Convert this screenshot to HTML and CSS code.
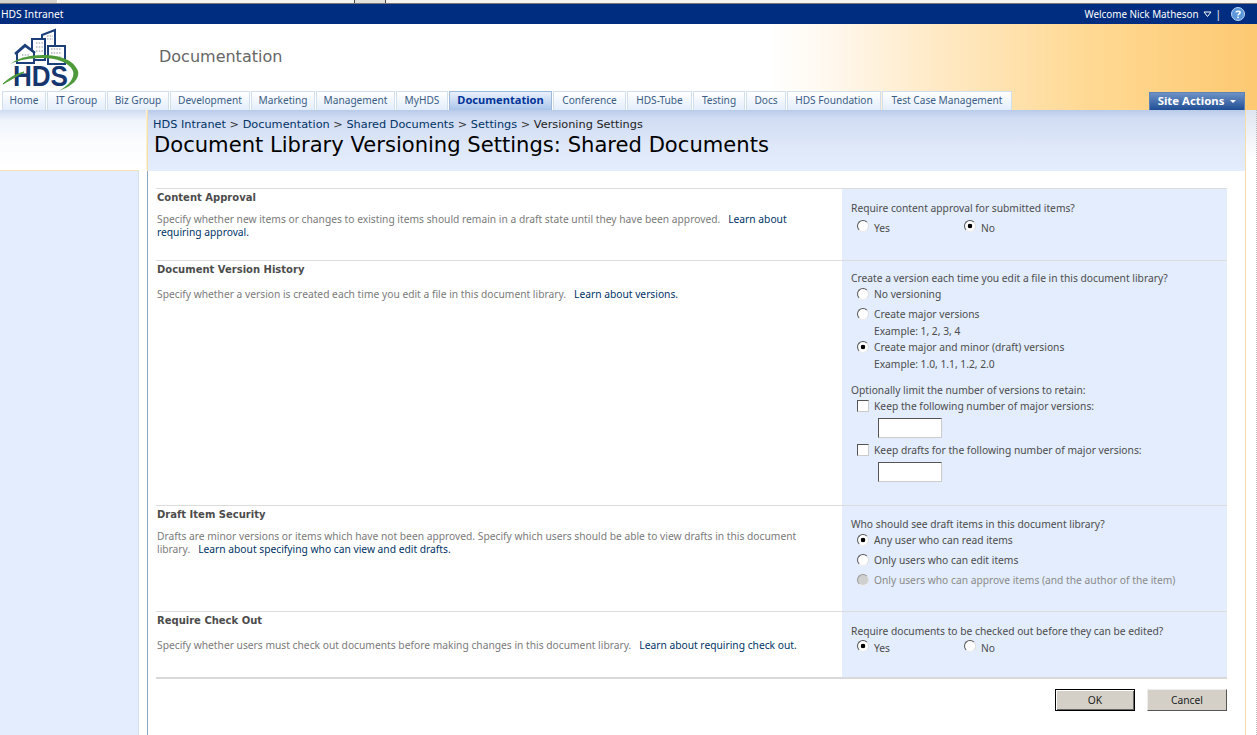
FILE: index.html
```html
<!DOCTYPE html>
<html lang="en">
<head>
<meta charset="utf-8">
<title>Document Library Versioning Settings</title>
<link rel="stylesheet" href="styles.css">
</head>
<body>
<div class="strip"></div>
<div class="globalbar">
  <span class="sitename">HDS Intranet</span>
  <div class="userbox">
    <span>Welcome Nick Matheson</span>
    <svg class="caret" width="9" height="7" viewBox="0 0 9 7"><path d="M1 1h7L4.5 5.5z" fill="none" stroke="#fff"/></svg>
    <span class="pipe">|</span>
    <svg class="help" width="14" height="14" viewBox="0 0 14 14"><circle cx="7" cy="7" r="6.5" fill="#5c97dc" stroke="#bcd6f3"/><path d="M4.8 5.4C5 3.9 9.2 3.6 9.2 5.6 9.2 7 7 7 7 8.6" fill="none" stroke="#fff" stroke-width="1.5"/><rect x="6.2" y="9.6" width="1.6" height="1.6" fill="#fff"/></svg>
  </div>
</div>
<header class="masthead">
  <div class="brand">
    <svg class="logo" width="90" height="67" viewBox="0 24 90 67">
      <g fill="#fff" stroke="#1c3f7c" stroke-width="2">
        <path d="M42 56V35l13-5v28z"/>
        <path d="M32 60V39h13v21z"/>
        <path d="M48 64V46h17v18z"/>
        <path d="M17 63V53l8-7 9 6v11z"/>
      </g>
      <path d="M15 54l10-9 10 8" fill="none" stroke="#1c3f7c" stroke-width="2.4"/>
      <g fill="none" stroke="#8a93a3" stroke-width="1.2" stroke-dasharray="1.5 1.2">
        <path d="M47 36h6M47 39h6"/>
        <path d="M36 43h7M36 47h7M36 51h7"/>
        <path d="M51 49h11M51 53h11M51 57h11"/>
        <path d="M22 55h7M22 58h7"/>
      </g>
      <path d="M10 64C18 58 30 55 43 55 60 55 74 60 78 71 80 79 72 86 59 91 69 85 75 78 73 71 69 62 56 58 43 58 30 58 19 60 10 64z" fill="#4e9a3b"/>
      <text class="logotext" x="13" y="86" textLength="55" lengthAdjust="spacingAndGlyphs">HDS</text>
      <path d="M3 84C9 78 16 74 24 72 17 76 10 80 3 84z" fill="#4e9a3b" stroke="#4e9a3b"/>
    </svg>
    <div class="areatitle">Documentation</div>
  </div>
  <nav class="navrow">
    <ul class="tabs">
      <li class="tab">Home</li>
      <li class="tab">IT Group</li>
      <li class="tab">Biz Group</li>
      <li class="tab">Development</li>
      <li class="tab">Marketing</li>
      <li class="tab">Management</li>
      <li class="tab">MyHDS</li>
      <li class="tab selected">Documentation</li>
      <li class="tab">Conference</li>
      <li class="tab">HDS-Tube</li>
      <li class="tab">Testing</li>
      <li class="tab">Docs</li>
      <li class="tab">HDS Foundation</li>
      <li class="tab">Test Case Management</li>
    </ul>
    <div class="siteactions">Site Actions <span class="sa-caret"></span></div>
  </nav>
</header>
<div class="pagebody">
  <aside class="leftcol">
    <div class="lefttop"></div>
    <div class="leftnav"></div>
  </aside>
  <main class="maincol">
    <div class="titleband">
      <div class="crumbs"><a>HDS Intranet</a> &gt; <a>Documentation</a> &gt; <a>Shared Documents</a> &gt; <a>Settings</a> &gt; <span class="crumbcur">Versioning Settings</span></div>
      <h1 class="pagetitle">Document Library Versioning Settings: Shared Documents</h1>
    </div>
    <form class="formarea">
      <section class="sec sec1">
        <div class="secleft">
          <h3 class="sechead">Content Approval</h3>
          <p class="secdesc">Specify whether new items or changes to existing items should remain in a draft state until they have been approved. &nbsp; <a class="lnk">Learn about<br>requiring approval.</a></p>
        </div>
        <div class="secright pt12">
          <div class="q">Require content approval for submitted items?</div>
          <div class="opt pair mt5">
            <label class="pairitem"><input type="radio" name="a" class="rb"><span class="lbl">Yes</span></label>
            <label class="pairitem"><input type="radio" name="a" class="rb" checked><span class="lbl">No</span></label>
          </div>
        </div>
      </section>
      <section class="sec sec2">
        <div class="secleft">
          <h3 class="sechead">Document Version History</h3>
          <p class="secdesc low">Specify whether a version is created each time you edit a file in this document library. &nbsp; <a class="lnk">Learn about versions.</a></p>
        </div>
        <div class="secright pt10">
          <div class="q">Create a version each time you edit a file in this document library?</div>
          <label class="opt mt1"><input type="radio" name="b" class="rb"><span class="lbl">No versioning</span></label>
          <label class="opt mt4"><input type="radio" name="b" class="rb"><span class="lbl">Create major versions</span></label>
          <div class="opt mt1 ex">Example: 1, 2, 3, 4</div>
          <label class="opt"><input type="radio" name="b" class="rb" checked><span class="lbl">Create major and minor (draft) versions</span></label>
          <div class="opt mt1 ex">Example: 1.0, 1.1, 1.2, 2.0</div>
          <div class="q limit">Optionally limit the number of versions to retain:</div>
          <label class="opt"><input type="checkbox" class="cb"><span class="lbl">Keep the following number of major versions:</span></label>
          <input type="text" class="num mt4">
          <label class="opt mt4"><input type="checkbox" class="cb"><span class="lbl">Keep drafts for the following number of major versions:</span></label>
          <input type="text" class="num mt4">
        </div>
      </section>
      <section class="sec sec3">
        <div class="secleft">
          <h3 class="sechead">Draft Item Security</h3>
          <p class="secdesc">Drafts are minor versions or items which have not been approved. Specify which users should be able to view drafts in this document<br>library. &nbsp; <a class="lnk">Learn about specifying who can view and edit drafts.</a></p>
        </div>
        <div class="secright pt11">
          <div class="q">Who should see draft items in this document library?</div>
          <label class="opt mt1"><input type="radio" name="c" class="rb" checked><span class="lbl">Any user who can read items</span></label>
          <label class="opt mt4"><input type="radio" name="c" class="rb"><span class="lbl">Only users who can edit items</span></label>
          <label class="opt mt4 off"><input type="radio" name="c" class="rb" disabled><span class="lbl">Only users who can approve items (and the author of the item)</span></label>
        </div>
      </section>
      <section class="sec sec4">
        <div class="secleft">
          <h3 class="sechead">Require Check Out</h3>
          <p class="secdesc low">Specify whether users must check out documents before making changes in this document library. &nbsp; <a class="lnk">Learn about requiring check out.</a></p>
        </div>
        <div class="secright pt12">
          <div class="q">Require documents to be checked out before they can be edited?</div>
          <div class="opt pair mt2">
            <label class="pairitem"><input type="radio" name="d" class="rb" checked><span class="lbl">Yes</span></label>
            <label class="pairitem"><input type="radio" name="d" class="rb"><span class="lbl">No</span></label>
          </div>
        </div>
      </section>
      <div class="actions">
        <button type="button" class="btn default">OK</button>
        <button type="button" class="btn">Cancel</button>
      </div>
    </form>
  </main>
  <div class="gutter"></div>
</div>
</body>
</html>
```

FILE: styles.css
```css
* { box-sizing: border-box; }
html, body { margin: 0; padding: 0; height: 735px; overflow: hidden; background: #fff; }
body { font-family: "Noto Sans", "DejaVu Sans", sans-serif; font-size: 10.25px; color: #4c4c4c; display: flex; flex-direction: column; }

.strip { height: 4px; flex: none; border-bottom: 1px solid #777; background: linear-gradient(90deg, #d6d3cc 0, #d6d3cc 57px, #fff 57px, #fff 58px, #f4f3f0 58px, #f4f3f0 354px, #444 354px, #444 355px, #e4e2dc 355px, #e4e2dc 385px, #444 385px, #444 386px, #f4f3f0 386px); }

.globalbar { height: 20px; flex: none; background: #002d80; color: #fff; display: flex; justify-content: space-between; align-items: center; }
.sitename { padding-left: 1px; }
.userbox { display: flex; align-items: center; padding-right: 12px; font-size: 9.85px; }
.caret { margin-left: 4px; }
.pipe { margin-left: 4px; margin-right: 10px; }

.masthead { height: 86px; flex: none; display: flex; flex-direction: column; background: linear-gradient(90deg, #fff 0, #fff 770px, #fff8ee 830px, #ffe9c4 940px, #ffd993 1090px, #fdc972 1257px); }
.brand { height: 67px; flex: none; display: flex; }
.logo { flex: none; }
.logotext { font-family: "Liberation Sans", sans-serif; font-weight: 700; font-size: 29px; fill: #16366f; }
.areatitle { margin-left: 69px; margin-top: 22px; font-family: "DejaVu Sans", sans-serif; font-size: 16px; line-height: 22px; color: #666; }

.navrow { height: 19px; flex: none; display: flex; justify-content: space-between; padding-left: 2px; padding-right: 12px; }
.tabs { list-style: none; margin: 0; padding: 0; display: flex; gap: 1px; }
.tab { height: 19px; line-height: 17px; text-align: center; font-size: 10.15px; color: #3b5d86; background: linear-gradient(#fff, #e3edfb); border: 1px solid #d2e0ee; border-bottom: 0; }
.tab:nth-child(1) { width: 44px; }
.tab:nth-child(2) { width: 59px; }
.tab:nth-child(3) { width: 62px; }
.tab:nth-child(4) { width: 80px; }
.tab:nth-child(5) { width: 64px; }
.tab:nth-child(6) { width: 79px; }
.tab:nth-child(7) { width: 52px; }
.tab:nth-child(8) { width: 103px; }
.tab:nth-child(9) { width: 73px; }
.tab:nth-child(10) { width: 65px; }
.tab:nth-child(11) { width: 52px; }
.tab:nth-child(12) { width: 40px; }
.tab:nth-child(13) { width: 94px; }
.tab:nth-child(14) { width: 130px; }
.tab.selected { font-weight: 700; font-size: 11.1px; line-height: 15px; color: #003399; background: linear-gradient(#eaf1fb, #a9c5ea); border-color: #9db9d9; }
.siteactions { width: 96px; height: 18px; margin-top: 1px; background: linear-gradient(#6e92c6, #1f4d94); border: 1px solid #5b83b8; border-bottom: 0; color: #fff; font-weight: 700; font-size: 11.4px; text-align: center; line-height: 15px; white-space: nowrap; }
.sa-caret { display: inline-block; width: 0; height: 0; margin-left: 3px; vertical-align: 2px; border: 3px solid transparent; border-top-color: #fff; border-bottom: 0; }

.pagebody { flex: 1; display: flex; min-height: 0; }
.leftcol { width: 147px; flex: none; display: flex; flex-direction: column; }
.lefttop { height: 60px; flex: none; background: linear-gradient(#cfdcf1 0, #eff3fb 10px, #fbfcfe 32px, #fff 60px); border-right: 1px solid #fbf0d0; }
.leftnav { flex: 1; width: 139px; background: #e3edfd; border-top: 1px solid #f5e1ab; border-right: 1px solid #d3e1f2; }

.maincol { width: 1098px; flex: none; display: flex; flex-direction: column; }
.titleband { height: 61px; flex: none; padding: 8px 0 0 5px; background: linear-gradient(#b9cbe9 0, #d0dcf3 8px, #dfe8f9 36px, #e3edfd 61px); border-left: 1px solid #f5dfa8; }
.crumbs { font-family: "DejaVu Sans", sans-serif; font-size: 11.3px; line-height: 14px; color: #333; }
.crumbs a { color: #003366; }
.crumbcur { color: #222; }
.pagetitle { margin: 1px 0 0 1px; font-family: "DejaVu Sans", sans-serif; font-weight: 400; font-size: 21.1px; line-height: 24px; color: #000; white-space: nowrap; }

.formarea { flex: 1; padding: 17px 18px 0 8px; border-left: 1px solid #8ba6c1; }
.sec { display: flex; border-top: 1px solid #dcdcdc; }
.sec1 { height: 72px; }
.sec2 { height: 245px; }
.sec3 { height: 106px; }
.sec4 { height: 66px; }
.secleft { width: 686px; flex: none; padding-left: 1px; }
.secright { flex: 1; background: #e3edfd; padding-left: 9px; display: flex; flex-direction: column; align-items: flex-start; }
.sechead { margin: 2px 0 0; font-family: "DejaVu Sans", sans-serif; font-size: 10px; line-height: 14px; font-weight: 700; color: #4c4c4c; }
.secdesc { margin: 8px 0 0; line-height: 13px; color: #7a7a7a; }
.secdesc.low { margin-top: 11px; }
.lnk { color: #003366; }

.pt10 { padding-top: 10px; }
.pt11 { padding-top: 11px; }
.pt12 { padding-top: 12px; }
.mt1 { margin-top: 1px; }
.mt2 { margin-top: 2px; }
.mt4 { margin-top: 4px; }
.mt5 { margin-top: 5px; }

.q { height: 14px; line-height: 14px; }
.q.limit { margin-top: 10px; height: 16px; line-height: 16px; }
.opt { height: 16px; line-height: 16px; display: flex; align-items: center; padding-left: 6px; }
.opt.ex { padding-left: 23px; }
.opt.off .lbl { color: #8a8a8a; }
.pair { padding-left: 0; }
.pairitem { width: 107px; padding-left: 6px; display: flex; align-items: center; }
.pairitem .rb { margin-top: -4px; }
.lbl { margin-left: 5px; }

.rb, .cb { appearance: none; -webkit-appearance: none; margin: 0; flex: none; width: 12px; height: 12px; background-color: #fff; }
.rb { border-radius: 50%; border: 1px solid; border-color: #555 #ddd #eee #555; }
.rb:checked { background: radial-gradient(circle at center, #000 0, #000 2px, #fff 2.6px); }
.rb:disabled { background: #cfcfcf; border-color: #999 #e2e2e2 #eee #999; }
.cb { border: 1px solid; border-color: #555 #ccc #ccc #555; }
.num { display: block; width: 64px; height: 20px; margin-left: 27px; padding: 0; background: #fff; border: 1px solid; border-color: #555 #ccc #ccc #555; }

.actions { border-top: 2px solid #d9d9d9; display: flex; justify-content: flex-end; gap: 12px; padding-top: 10px; }
.btn { width: 80px; height: 22px; padding: 0; font: inherit; color: #222; background: #d4d0c8; border: 1px solid; border-color: #eee #555 #555 #eee; }
.btn.default { border-color: #000; box-shadow: inset 1px 1px #fff, inset -1px -1px #666; }

.gutter { flex: 1; border-left: 1px solid #f5dfa8; border-right: 1px dotted #bbb; background: linear-gradient(#dfe5f0, #fff 50px); }
```
